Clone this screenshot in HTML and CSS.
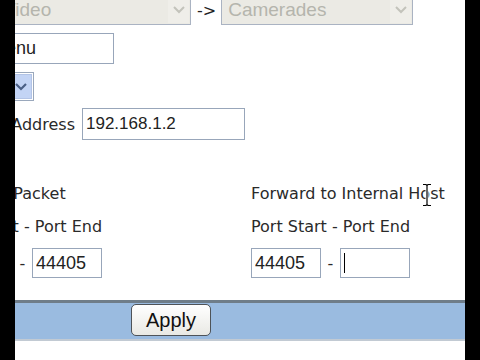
FILE: index.html
```html
<!DOCTYPE html>
<html lang="en">
  <head>
    <meta charset="UTF-8" />
    <meta name="viewport" content="width=device-width, initial-scale=1.0" />
    <title>Port Forwarding</title>
    <link rel="stylesheet" href="styles.css">
  </head>
  <body>
    <div class="screen">
      <div class="form">
        <div class="row row-top">
          <div class="select select-src">
            <span class="select-text">Video</span>
            <span class="select-arrow"><svg width="12" height="8" viewBox="0 0 12 8"><polyline points="1,1 6,6 11,1" /></svg></span>
          </div>
          <span class="to">-&gt;</span>
          <div class="select select-dst">
            <span class="select-text">Camerades</span>
            <span class="select-arrow"><svg width="12" height="8" viewBox="0 0 12 8"><polyline points="1,1 6,6 11,1" /></svg></span>
          </div>
        </div>

        <div class="row row-name">
          <input class="field field-name" type="text" value="Menu" />
        </div>

        <div class="row row-proto">
          <div class="select select-proto">
            <span class="select-text">TCP</span>
            <span class="select-arrow blue"><svg width="12" height="8" viewBox="0 0 12 8"><polyline points="1,1 6,6 11,1" /></svg></span>
          </div>
        </div>

        <div class="row row-ip">
          <span class="label label-ip">IP Address</span>
          <input class="field field-ip" type="text" value="192.168.1.2" />
        </div>

        <div class="cols">
          <div class="col">
            <div class="col-title">Inbound Packet</div>
            <div class="col-sub">Port Start - Port End</div>
            <div class="ports">
              <input class="field field-port" type="text" value="44405" />
              <span class="dash">-</span>
              <input class="field field-port" type="text" value="44405" />
            </div>
          </div>
          <div class="col">
            <div class="col-title">Forward to Internal Host</div>
            <div class="col-sub">Port Start - Port End</div>
            <div class="ports">
              <input class="field field-port" type="text" value="44405" />
              <span class="dash">-</span>
              <div class="field field-port focused"><span class="caret"></span></div>
            </div>
          </div>
        </div>
      </div>

      <div class="bar">
        <button class="apply" type="button">Apply</button>
      </div>

      <!-- mouse pointer -->
      <svg class="ibeam" width="12" height="24" viewBox="0 0 12 24">
        <path d="M2 1.5h3l1 1 1-1h3M6 2.5v19M2 22.5h3l1-1 1 1h3" fill="none" stroke="#fff" stroke-width="3" />
        <path d="M2 1.5h3l1 1 1-1h3M6 2.5v19M2 22.5h3l1-1 1 1h3" fill="none" stroke="#000" stroke-width="1.2" />
      </svg>
    </div>
  </body>
</html>
```

FILE: styles.css
```css
html {
  background-color: #000;
}

body {
  margin: 0;
  width: 480px;
  height: 360px;
  background-color: #000;
  font-family: "DejaVu Sans", sans-serif;
  color: #2a2a2a;
}

.screen {
  position: relative;
  width: 450px;
  height: 360px;
  margin-left: 15px;
  background-color: #fff;
  overflow: hidden;
}

/* content is scrolled to the left, so the form starts off screen */
.form {
  margin-left: -72px;
}

.row {
  display: flex;
  align-items: center;
}

.row-top {
  margin-top: -5px;
  height: 30px;
}

.select {
  display: flex;
  align-items: stretch;
  flex-shrink: 0;
  box-sizing: border-box;
  height: 30px;
  border: 1px solid #aab3c2;
  background-color: #ebeae4;
  font-family: "Liberation Sans", Arial, sans-serif;
  font-size: 19px;
  color: #b5b5ad;
}
.select-text {
  flex: 1;
  padding-left: 6px;
  line-height: 28px;
  overflow: hidden;
  white-space: nowrap;
}
.select-arrow {
  width: 21px;
  margin: 1px;
  display: flex;
  align-items: center;
  justify-content: center;
  background-color: #efeee9;
}
.select-arrow svg polyline {
  fill: none;
  stroke: #c3c3bb;
  stroke-width: 2;
}
.select-src {
  margin-left: 53px;
  width: 195px;
}
.select-dst {
  margin-left: 5px;
  width: 192px;
}
.to {
  margin-left: 6px;
  flex-shrink: 0;
  white-space: nowrap;
  font-size: 16px;
  color: #222;
}

.field {
  box-sizing: border-box;
  border: 1px solid #98a6ba;
  background-color: #fff;
  font-family: "Liberation Sans", Arial, sans-serif;
  font-size: 18px;
  color: #222;
  padding: 0 3px;
  margin: 0;
  outline: none;
}

.row-name {
  margin-top: 8px;
}
.field-name {
  margin-left: 44px;
  width: 127px;
  height: 31px;
}

.row-proto {
  margin-top: 8px;
}
.select-proto {
  margin-left: 20px;
  width: 71px;
  height: 29px;
  background-color: #fff;
  color: #222;
  border-color: #9aa8bc;
}
.select-arrow.blue {
  width: 20px;
  margin: 1px;
  background-color: #c3d4f5;
  border: 1px solid #b3c4e6;
}
.select-arrow.blue svg polyline {
  stroke: #4a5f86;
  stroke-width: 2.2;
}

.row-ip {
  margin-top: 7px;
}
.label {
  font-size: 16px;
}
.label-ip {
  width: 132px;
  text-align: right;
  flex-shrink: 0;
}
.field-ip {
  margin-left: 7px;
  width: 163px;
  height: 32px;
  font-size: 17px;
}

.cols {
  display: flex;
  margin-top: 43px;
}
.col {
  width: 308px;
  flex-shrink: 0;
  white-space: nowrap;
}
.col-title,
.col-sub {
  font-size: 16px;
  line-height: 22px;
}
.col-sub {
  margin-top: 11px;
}
.ports {
  display: flex;
  align-items: center;
  margin-top: 10px;
}
.field-port {
  width: 70px;
  height: 30px;
}
.dash {
  width: 19px;
  text-align: center;
  font-size: 16px;
}
.focused {
  display: flex;
  align-items: center;
}
.caret {
  width: 1px;
  height: 20px;
  margin-left: 0;
  background-color: #000;
}

.bar {
  margin-top: 22px;
  border-top: 3px solid #6f7d89;
  border-bottom: 2px solid #c2cad3;
  background-color: #9abbe0;
  padding: 1px 0 3px 116px;
}
.apply {
  display: block;
  width: 80px;
  height: 32px;
  border: 1px solid #4e5358;
  border-radius: 5px;
  background: linear-gradient(#ffffff, #e9e9e4);
  font-family: "Liberation Sans", Arial, sans-serif;
  font-size: 20px;
  color: #111;
  padding: 0;
}

.ibeam {
  position: absolute;
  left: 406px;
  top: 183px;
}
```
